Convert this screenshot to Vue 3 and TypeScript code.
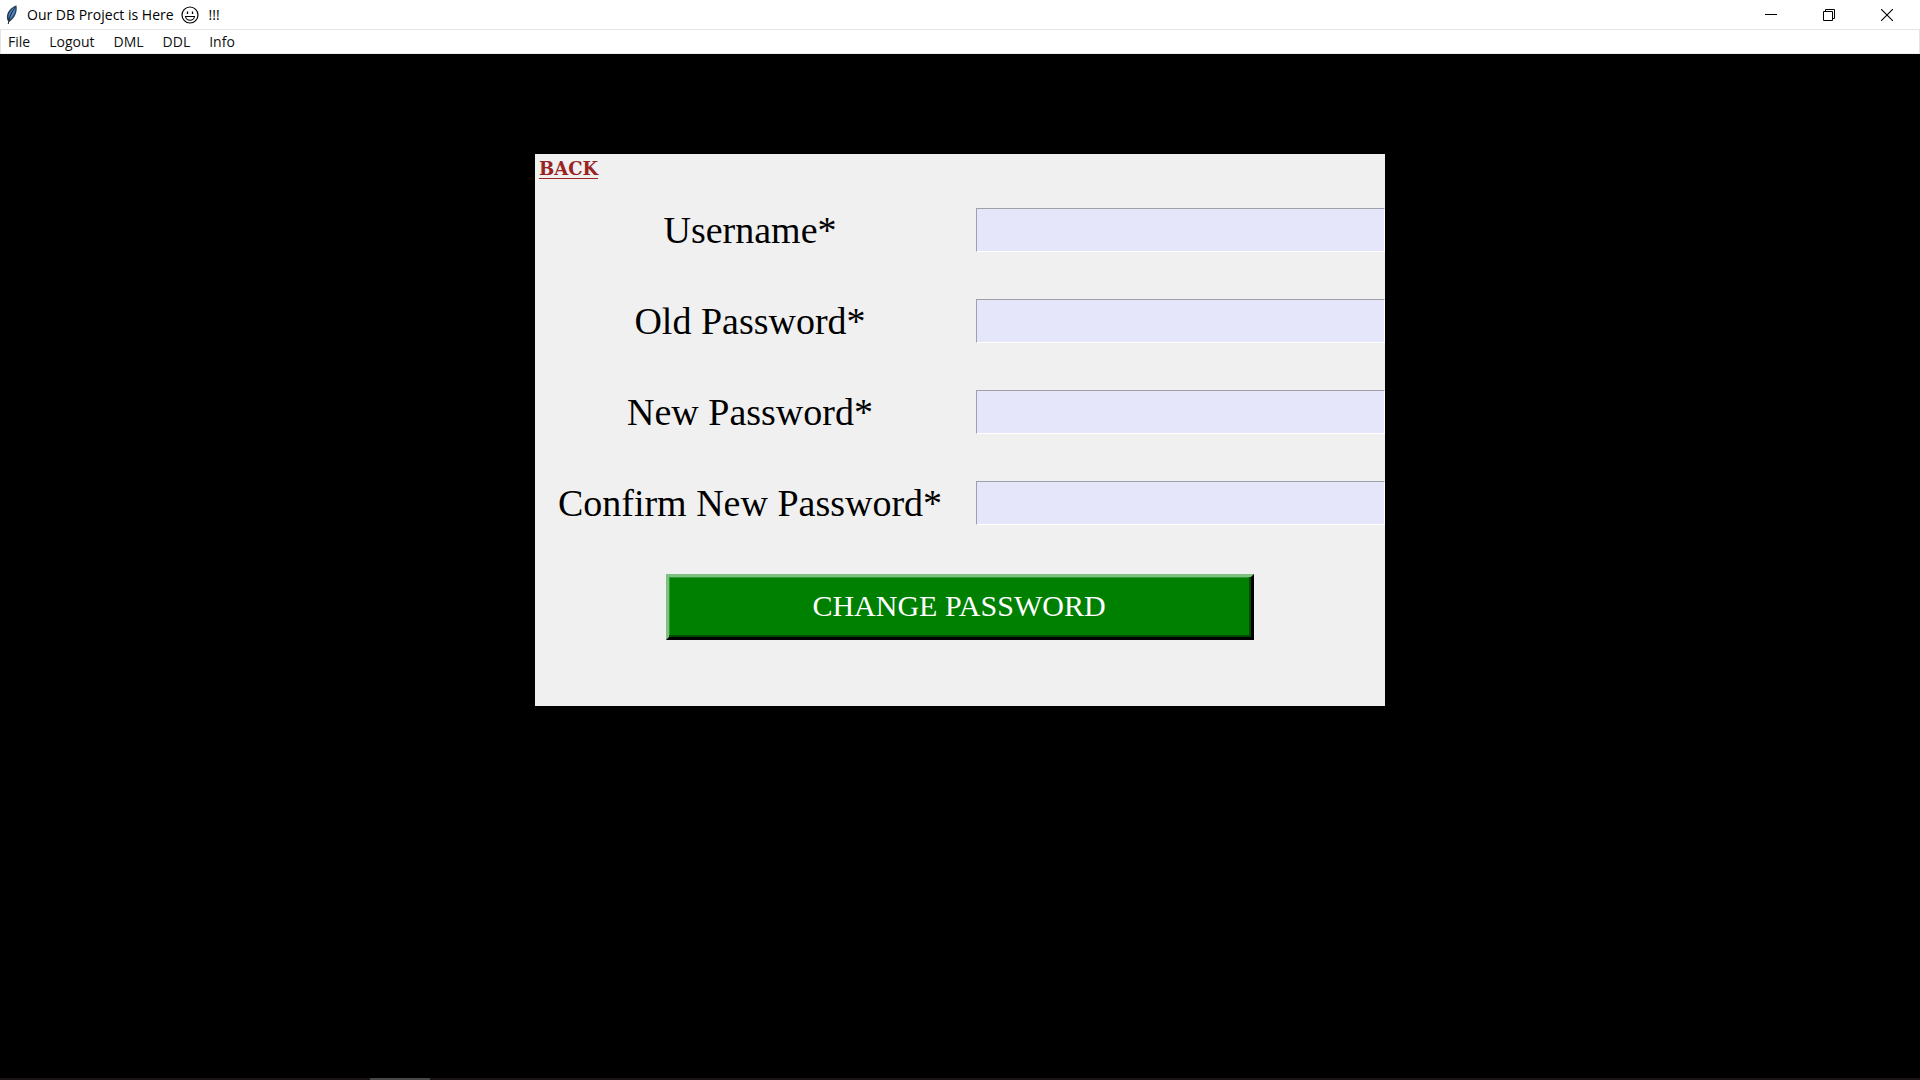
<script setup lang="ts">
import { reactive } from 'vue'

interface Field {
  id: string
  label: string
  type: 'text' | 'password'
}

const menus: string[] = ['File', 'Logout', 'DML', 'DDL', 'Info']

const fields: Field[] = [
  { id: 'username', label: 'Username*', type: 'text' },
  { id: 'old-password', label: 'Old Password*', type: 'password' },
  { id: 'new-password', label: 'New Password*', type: 'password' },
  { id: 'confirm-password', label: 'Confirm New Password*', type: 'password' },
]

const values = reactive<Record<string, string>>({})
</script>

<template>
  <div class="window">
    <header class="titlebar">
      <svg class="feather" width="12" height="20" viewBox="0 0 12 20" aria-hidden="true">
        <path d="M10.500.5C7 1 2.500 5 1.200 9.500c-.6 2-.4 4.500.4 6l1.800 1.500 3.200-3c3-3 4.800-8 3.900-13.500z" fill="#2b3f58" />
        <path d="M9.500 1.500C6.500 3.500 3 7 2.500 11.500l.5 3 2-1c3-3 4.800-7 4.500-12z" fill="#4f86c4" />
        <path d="M9.500 2C6 6.500 3.500 11 2.200 19" fill="none" stroke="#1a1f28" stroke-width="1" />
      </svg>
      <span class="title">Our DB Project is Here</span>
      <svg class="smiley" width="18" height="18" viewBox="0 0 18 18" role="img" aria-label="Smiling face">
        <circle cx="9" cy="9" r="8" fill="none" stroke="#000" stroke-width="1.200" />
        <path d="M6.500 5.500v2.500M11.500 5.500v2.500" stroke="#000" stroke-width="1.300" />
        <path d="M4.500 10.500h9c-.4 2.300-2.200 3.700-4.500 3.700s-4.100-1.400-4.500-3.700z" fill="none" stroke="#000" stroke-width="1.100" />
      </svg>
      <span class="title">!!!</span>
      <div class="controls">
        <button type="button" aria-label="Minimize">
          <svg width="12" height="12" viewBox="0 0 12 12"><path d="M0 5.500h12" stroke="#000" /></svg>
        </button>
        <button type="button" aria-label="Restore">
          <svg width="12" height="12" viewBox="0 0 12 12" fill="none" stroke="#000"><path d="M.5 2.500h9v9h-9zM2.500 2.500v-2h9v9h-2" /></svg>
        </button>
        <button type="button" aria-label="Close">
          <svg width="12" height="12" viewBox="0 0 12 12"><path d="M0 0l12 12M12 0L0 12" stroke="#000" stroke-width="1.100" /></svg>
        </button>
      </div>
    </header>

    <nav class="menubar">
      <button v-for="menu in menus" :key="menu" type="button">{{ menu }}</button>
    </nav>

    <main class="desktop">
      <form class="panel" @submit.prevent>
        <a class="back" href="#">BACK</a>
        <div class="fields">
          <template v-for="field in fields" :key="field.id">
            <label :for="field.id">{{ field.label }}</label>
            <input :id="field.id" v-model="values[field.id]" :type="field.type" />
          </template>
        </div>
        <button class="submit" type="submit">CHANGE PASSWORD</button>
      </form>
    </main>

    <footer class="taskbar"><span class="active-task"></span></footer>
  </div>
</template>

<style>
body {
  background: #000;
}
</style>

<style scoped>
.window {
  display: flex;
  flex-direction: column;
  min-height: 100vh;
  background: #000;
  font-family: "Open Sans", "Noto Sans", sans-serif;
}

.titlebar {
  display: flex;
  align-items: center;
  height: 29px;
  padding: 0 4px 0 6px;
  background: #fff;
  color: #000;
  font-size: 14px;
}

.feather {
  margin-right: 9px;
}

.title {
  line-height: 20px;
  white-space: nowrap;
}

.smiley {
  margin: 0 10px 0 7px;
}

.controls {
  display: flex;
  align-self: stretch;
  margin-left: auto;
}

.controls button {
  display: flex;
  align-items: center;
  justify-content: center;
  width: 58px;
  padding: 0;
  border: 0;
  background: none;
}

.menubar {
  display: flex;
  gap: 19px;
  box-sizing: border-box;
  height: 25px;
  padding: 0 7px;
  border: 1px solid #e4e4e4;
  border-bottom-color: #f0f0f0;
  background: #fff;
}

.menubar button {
  padding: 0;
  border: 0;
  background: none;
  color: #101010;
  font-family: inherit;
  font-size: 14px;
  line-height: 22px;
}

.desktop {
  flex: 1;
  padding-top: 100px;
}

.panel {
  display: flex;
  flex-direction: column;
  box-sizing: border-box;
  width: 100%;
  max-width: 850px;
  margin: 0 auto;
  padding-bottom: 66px;
  background: #f0f0f0;
  font-family: "Liberation Serif", "Times New Roman", serif;
}

.back {
  align-self: flex-start;
  margin: 4px 0 0 4px;
  padding-top: 2px;
  border-bottom: 1px solid #982424;
  color: #982424;
  font-family: Algerian, "DejaVu Serif", serif;
  font-size: 18px;
  font-weight: 700;
  line-height: 18px;
  text-decoration: none;
}

.fields {
  display: grid;
  grid-template-columns: 430px 1fr;
  align-items: center;
  gap: 47px 11px;
  margin-top: 29px;
}

.fields label {
  color: #000;
  font-size: 38px;
  line-height: 44px;
  text-align: center;
}

.fields input {
  box-sizing: border-box;
  width: 100%;
  min-width: 0;
  height: 44px;
  padding: 0 4px;
  border: 1px solid;
  border-color: #a0a0a8 #fff #fff #a0a0a8;
  border-radius: 0;
  background: #e6e6fa;
  font-family: inherit;
  font-size: 30px;
}

.submit {
  align-self: center;
  width: 100%;
  max-width: 588px;
  height: 66px;
  margin-top: 49px;
  padding: 0 2px 2px 0;
  border: 3px solid;
  border-color: #80c080 #000 #000 #80c080;
  border-radius: 0;
  background: #008000;
  box-shadow: inset -2px -2px #004c00, inset 1px 1px #309830;
  color: #fff;
  font-family: inherit;
  font-size: 30px;
}

.taskbar {
  height: 2px;
  padding-left: 370px;
  background: #181416;
}

.active-task {
  display: block;
  width: 60px;
  height: 2px;
  background: #484848;
}
</style>
